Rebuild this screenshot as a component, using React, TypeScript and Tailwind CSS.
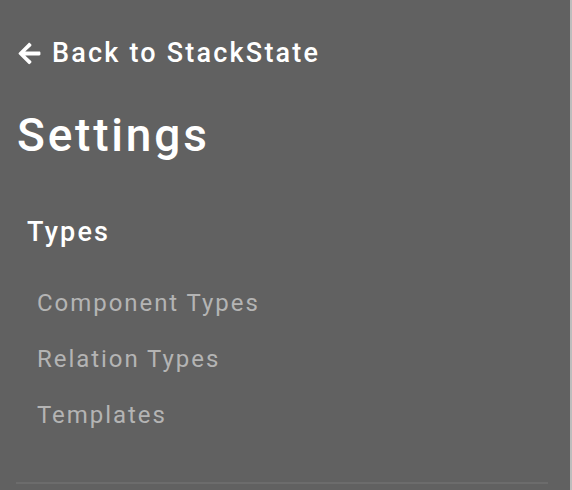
const typeLinks = ['Component Types', 'Relation Types', 'Templates'];

function BackArrow() {
  // solid "arrow-left" glyph, Font Awesome style
  return (
    <svg viewBox="0 0 448 512" className="w-[25px] h-[25px] fill-white">
      <path d="M257.5 445.1l-22.2 22.2c-9.4 9.4-24.6 9.4-33.9 0L7 273c-9.4-9.4-9.4-24.6 0-33.9L201.4 44.7c9.4-9.4 24.6-9.4 33.9 0l22.2 22.2c9.5 9.5 9.3 25-.4 34.3L136.6 216H424c13.3 0 24 10.7 24 24v32c0 13.3-10.7 24-24 24H136.6l120.5 114.8c9.8 9.3 10 24.8.4 34.3z" />
    </svg>
  );
}

export default function App() {
  return (
    <div className="w-[572px] h-[490px] bg-[#616161] border-r-2 border-[#bdbdbd] overflow-hidden font-['Roboto',sans-serif]">
      <div className="pl-[17px] pr-[22px] pt-[38px]">
        {/* back link */}
        <a className="flex items-center gap-[10px] text-white text-[27px] leading-[30px] font-medium tracking-[2.2px]">
          <BackArrow />
          <span>Back to StackState</span>
        </a>

        <h1 className="mt-[40px] text-white text-[46px] leading-[54px] font-medium tracking-[2.8px]">Settings</h1>

        {/* types section */}
        <div className="mt-[54px] pl-[10px]">
          <h2 className="text-white text-[27px] leading-[32px] font-medium tracking-[2.2px]">Types</h2>
          <ul className="mt-[40px] pl-[10px]">
            {typeLinks.map((link) => (
              <li key={link} className="h-[56px] flex items-start">
                <span className="text-[#b4b4b4] text-[24px] leading-[30px] tracking-[1.95px]">{link}</span>
              </li>
            ))}
          </ul>
        </div>

        <div className="mt-[26px] h-[2px] bg-[#6c6c6c] -ml-[1px]" />
      </div>
    </div>
  );
}
